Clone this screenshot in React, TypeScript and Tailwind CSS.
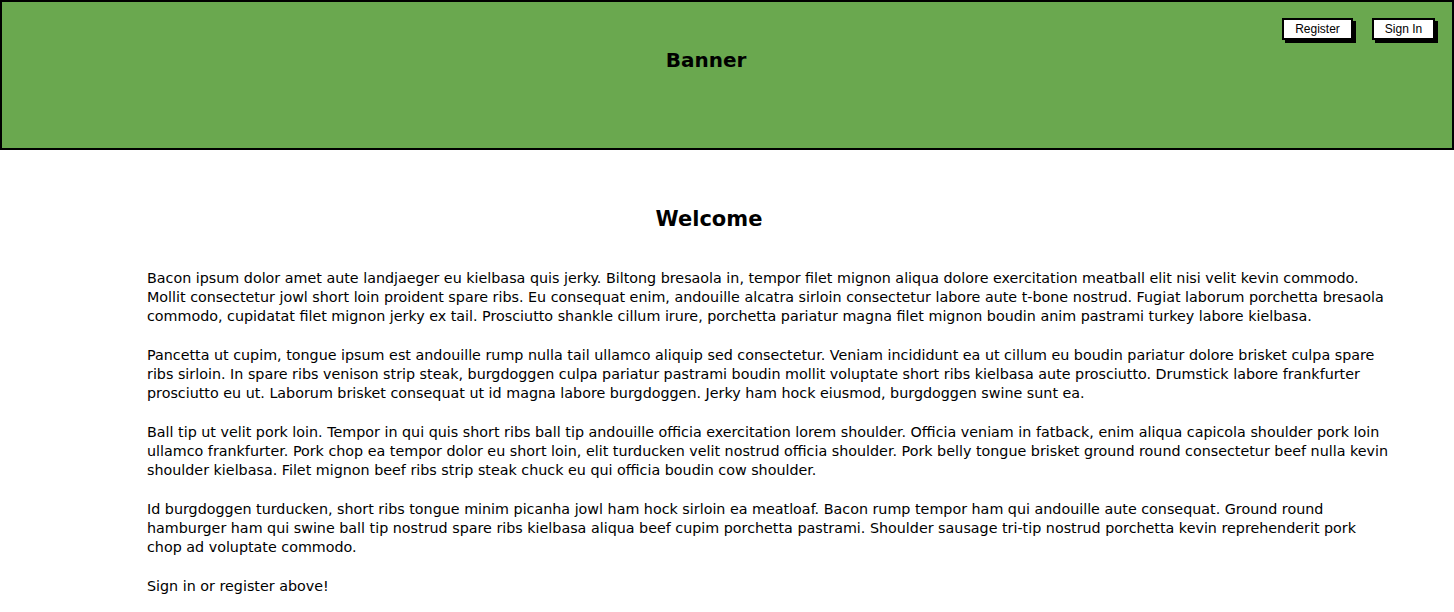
const paragraphs: string[][] = [
  [
    'Bacon ipsum dolor amet aute landjaeger eu kielbasa quis jerky. Biltong bresaola in, tempor filet mignon aliqua dolore exercitation meatball elit nisi velit kevin commodo.',
    'Mollit consectetur jowl short loin proident spare ribs. Eu consequat enim, andouille alcatra sirloin consectetur labore aute t-bone nostrud. Fugiat laborum porchetta bresaola',
    'commodo, cupidatat filet mignon jerky ex tail. Prosciutto shankle cillum irure, porchetta pariatur magna filet mignon boudin anim pastrami turkey labore kielbasa.',
  ],
  [
    'Pancetta ut cupim, tongue ipsum est andouille rump nulla tail ullamco aliquip sed consectetur. Veniam incididunt ea ut cillum eu boudin pariatur dolore brisket culpa spare',
    'ribs sirloin. In spare ribs venison strip steak, burgdoggen culpa pariatur pastrami boudin mollit voluptate short ribs kielbasa aute prosciutto. Drumstick labore frankfurter',
    'prosciutto eu ut. Laborum brisket consequat ut id magna labore burgdoggen. Jerky ham hock eiusmod, burgdoggen swine sunt ea.',
  ],
  [
    'Ball tip ut velit pork loin. Tempor in qui quis short ribs ball tip andouille officia exercitation lorem shoulder. Officia veniam in fatback, enim aliqua capicola shoulder pork loin',
    'ullamco frankfurter. Pork chop ea tempor dolor eu short loin, elit turducken velit nostrud officia shoulder. Pork belly tongue brisket ground round consectetur beef nulla kevin',
    'shoulder kielbasa. Filet mignon beef ribs strip steak chuck eu qui officia boudin cow shoulder.',
  ],
  [
    'Id burgdoggen turducken, short ribs tongue minim picanha jowl ham hock sirloin ea meatloaf. Bacon rump tempor ham qui andouille aute consequat. Ground round',
    'hamburger ham qui swine ball tip nostrud spare ribs kielbasa aliqua beef cupim porchetta pastrami. Shoulder sausage tri-tip nostrud porchetta kevin reprehenderit pork',
    'chop ad voluptate commodo.',
  ],
  ['Sign in or register above!'],
]

const SketchButton = ({ label, width }: { label: string; width: string }) => (
  <button
    className={`${width} h-[22px] bg-white border-2 border-black text-[12px] leading-none text-black shadow-[3px_3px_0_#000] flex items-center justify-center font-['Liberation_Sans',Arial,sans-serif]`}
  >
    {label}
  </button>
)

export default function App() {
  return (
    <div className="w-[1454px] h-[612px] bg-white text-black font-['DejaVu_Sans',Verdana,sans-serif] overflow-hidden">
      {/* Banner */}
      <header className="relative h-[150px] bg-[#6aa84f] border-2 border-black flex items-center justify-center">
        <h1 className="text-[20px] font-bold -mt-[30px] mr-[42px]">Banner</h1>
        <div className="absolute top-[16px] right-[17px] flex gap-[19px]">
          <SketchButton label="Register" width="w-[71px]" />
          <SketchButton label="Sign In" width="w-[63px]" />
        </div>
      </header>

      {/* Content */}
      <main className="pt-[56px] pl-[147px] pr-[20px]">
        <h2 className="text-[21px] font-bold text-center pr-[163px] leading-[26px]">
          Welcome
        </h2>
        <div className="mt-[37px] flex flex-col gap-[20px] text-[14.3px] leading-[19px] whitespace-nowrap">
          {paragraphs.map((lines, i) => (
            <p key={i}>
              {lines.map((line, j) => (
                <span key={j} className="block">
                  {line}
                </span>
              ))}
            </p>
          ))}
        </div>
      </main>
    </div>
  )
}
